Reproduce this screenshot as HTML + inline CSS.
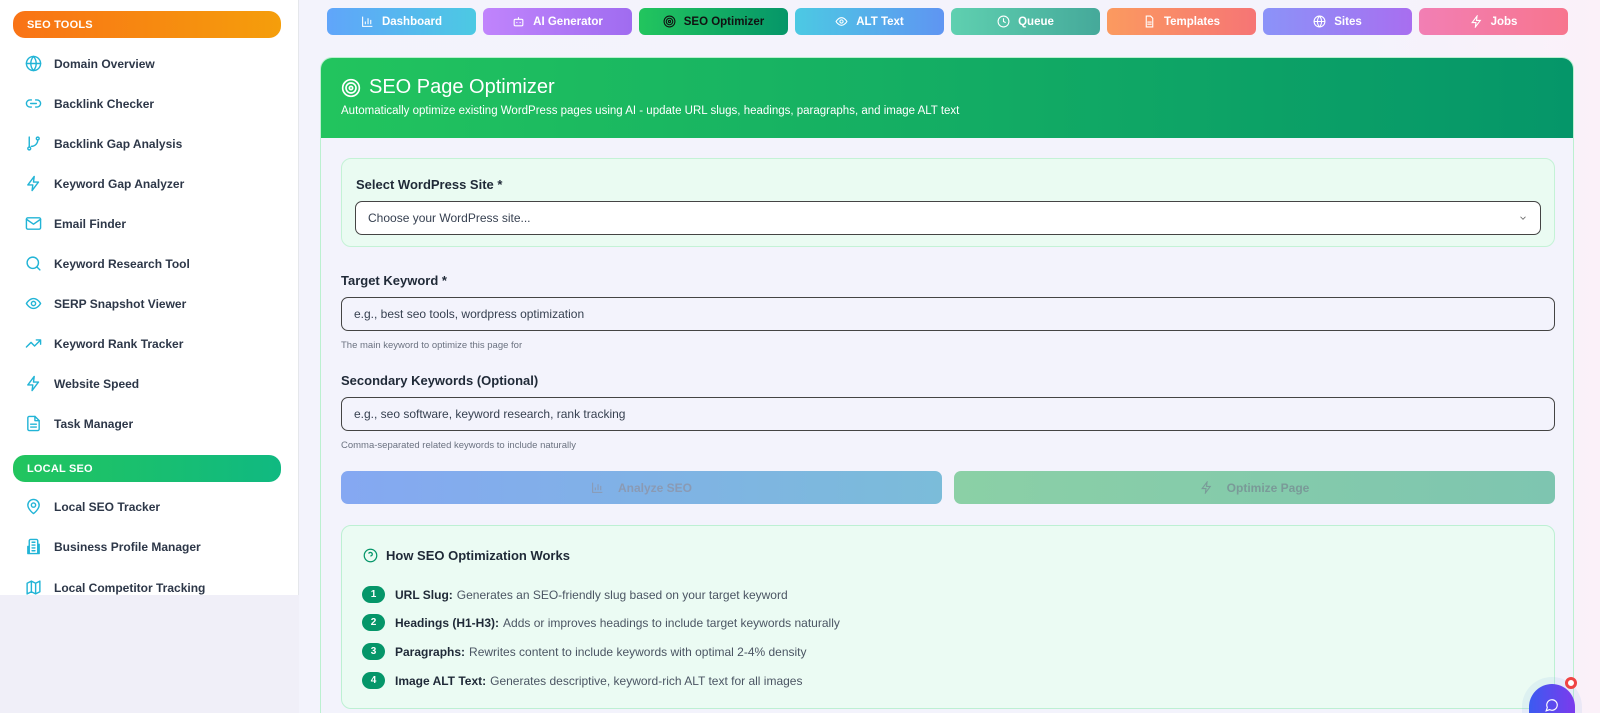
<!DOCTYPE html>
<html style="width:1600px;height:713px;overflow:hidden"><head><meta charset="utf-8"><style>
*{box-sizing:border-box;margin:0;padding:0}
html,body{width:1600px;height:713px;overflow:hidden}
body{font-family:"Liberation Sans",sans-serif;background:linear-gradient(90deg,#f3f3fc 0%,#f4f3fc 85%,#fbf1f9 100%);position:relative;color:#1f2937}
.side{position:absolute;left:0;top:0;width:299px;height:595px;background:#fff;border-right:1px solid #e5e7eb}
.below{position:absolute;left:0;top:595px;width:299px;height:118px;background:#f0eff8}
.sh{position:absolute;left:13px;width:268px;height:27px;border-radius:12px;color:#fff;font-weight:bold;font-size:11px;padding:8px 0 0 14px;letter-spacing:.2px}
.it{position:absolute;left:25px;font-size:12px;font-weight:bold;color:#2d3748;display:flex;align-items:center}
.it svg{width:17px;height:17px;margin-right:12px;stroke:#22b4d6;fill:none;stroke-width:2;stroke-linecap:round;stroke-linejoin:round}
.tabs{position:absolute;left:327px;top:8px;width:1241px;display:flex;gap:7px}
.tab{flex:1;height:27px;border-radius:6px;color:#fff;font-weight:bold;font-size:11.5px;display:flex;align-items:center;justify-content:center;gap:8px}
.tab svg{width:13px;height:13px;stroke:#fff;fill:none;stroke-width:2}
.card{position:absolute;left:320px;top:57px;width:1254px;height:656px;border-radius:12px 12px 0 0;border:1px solid #bbf0d0;border-bottom:none;background:#f3f3fc;overflow:hidden}
.hd{height:80px;background:linear-gradient(90deg,#22c45e,#059669);color:#fff;padding:18px 20px}
.hd h1{font-size:20px;font-weight:normal;display:flex;align-items:center;gap:8px}
.hd p{font-size:11.5px;margin-top:6px}
.abs{position:absolute}
.lbl{font-size:13px;font-weight:bold;color:#1f2937}
.inp{border:1.5px solid #444;border-radius:7px;font-size:12px;color:#374151;padding-left:12px;display:flex;align-items:center}
.help{font-size:9.5px;color:#6b7280}
.badge{display:inline-block;width:23px;height:17px;border-radius:9px;background:#059669;color:#fff;font-size:10px;font-weight:bold;text-align:center;line-height:17px;margin-right:10px}
.row{position:absolute;left:41px;font-size:12px;color:#4b5563;display:flex;align-items:center}
.row b{color:#1f2937;margin-right:4px}
</style></head><body>
<div class="side">
<div class="sh" style="top:11px;background:linear-gradient(90deg,#f97316,#f59e0b)">SEO TOOLS</div>
<div class="it" style="top:55px"><svg viewBox="0 0 24 24"><circle cx="12" cy="12" r="10"/><path d="M2 12h20M12 2a15 15 0 0 1 0 20M12 2a15 15 0 0 0 0 20"/></svg>Domain Overview</div>
<div class="it" style="top:95px"><svg viewBox="0 0 24 24"><path d="M9 17H7a5 5 0 0 1 0-10h2M15 7h2a5 5 0 0 1 0 10h-2M8 12h8"/></svg>Backlink Checker</div>
<div class="it" style="top:135px"><svg viewBox="0 0 24 24"><circle cx="6" cy="19" r="2"/><circle cx="18" cy="5" r="2"/><path d="M6 3v14M18 7a9 9 0 0 1-9 9"/></svg>Backlink Gap Analysis</div>
<div class="it" style="top:175px"><svg viewBox="0 0 24 24"><path d="M13 2 4 14h7l-1 8 9-12h-7z"/></svg>Keyword Gap Analyzer</div>
<div class="it" style="top:215px"><svg viewBox="0 0 24 24"><rect x="2" y="4" width="20" height="16" rx="2"/><path d="m2 6 10 7 10-7"/></svg>Email Finder</div>
<div class="it" style="top:255px"><svg viewBox="0 0 24 24"><circle cx="11" cy="11" r="8"/><path d="m21 21-4.3-4.3"/></svg>Keyword Research Tool</div>
<div class="it" style="top:295px"><svg viewBox="0 0 24 24"><path d="M2 12s4-7 10-7 10 7 10 7-4 7-10 7S2 12 2 12z"/><circle cx="12" cy="12" r="3"/></svg>SERP Snapshot Viewer</div>
<div class="it" style="top:335px"><svg viewBox="0 0 24 24"><path d="m22 7-8.5 8.5-5-5L2 17M16 7h6v6"/></svg>Keyword Rank Tracker</div>
<div class="it" style="top:375px"><svg viewBox="0 0 24 24"><path d="M13 2 4 14h7l-1 8 9-12h-7z"/></svg>Website Speed</div>
<div class="it" style="top:415px"><svg viewBox="0 0 24 24"><path d="M14 2H6a2 2 0 0 0-2 2v16a2 2 0 0 0 2 2h12a2 2 0 0 0 2-2V8z"/><path d="M14 2v6h6M8 13h8M8 17h8"/></svg>Task Manager</div>
<div class="sh" style="top:455px;background:linear-gradient(90deg,#22c55e,#10b981)">LOCAL SEO</div>
<div class="it" style="top:498px"><svg viewBox="0 0 24 24"><path d="M20 10c0 6-8 12-8 12s-8-6-8-12a8 8 0 0 1 16 0z"/><circle cx="12" cy="10" r="3"/></svg>Local SEO Tracker</div>
<div class="it" style="top:538px"><svg viewBox="0 0 24 24"><path d="M6 22V4a2 2 0 0 1 2-2h8a2 2 0 0 1 2 2v18zM6 12H4v10h2M18 9h2v13h-2M10 6h4M10 10h4M10 14h4M10 18h4"/></svg>Business Profile Manager</div>
<div class="it" style="top:579px"><svg viewBox="0 0 24 24"><path d="M3 6l6-3 6 3 6-3v15l-6 3-6-3-6 3zM9 3v15M15 6v15"/></svg>Local Competitor Tracking</div>
</div>
<div class="below"></div>

<div class="tabs">
<div class="tab" style="background:linear-gradient(90deg,#60a5fa,#4cc9e3)"><svg viewBox="0 0 24 24"><path d="M3 3v18h18M8 17v-5M13 17V6M18 17v-8"/></svg>Dashboard</div>
<div class="tab" style="background:linear-gradient(90deg,#c084fc,#a06cf0)"><svg viewBox="0 0 24 24"><rect x="4" y="8" width="16" height="12" rx="2"/><path d="M12 8V4M9 13v2M15 13v2"/></svg>AI Generator</div>
<div class="tab" style="background:linear-gradient(90deg,#22c55e,#059669);color:#111"><svg viewBox="0 0 24 24" style="stroke:#111"><circle cx="12" cy="12" r="10"/><circle cx="12" cy="12" r="6"/><circle cx="12" cy="12" r="2"/></svg>SEO Optimizer</div>
<div class="tab" style="background:linear-gradient(90deg,#4cc9e3,#5f95f2)"><svg viewBox="0 0 24 24"><path d="M2 12s4-7 10-7 10 7 10 7-4 7-10 7S2 12 2 12z"/><circle cx="12" cy="12" r="3"/></svg>ALT Text</div>
<div class="tab" style="background:linear-gradient(90deg,#5fd0b0,#45a99a)"><svg viewBox="0 0 24 24"><circle cx="12" cy="12" r="10"/><path d="M12 6v6l4 2"/></svg>Queue</div>
<div class="tab" style="background:linear-gradient(90deg,#fb9a5f,#f67575)"><svg viewBox="0 0 24 24"><path d="M14 2H6v20h12V6zM8 13h8M8 17h8"/></svg>Templates</div>
<div class="tab" style="background:linear-gradient(90deg,#8b93f8,#a86ef0)"><svg viewBox="0 0 24 24"><circle cx="12" cy="12" r="10"/><path d="M2 12h20M12 2a15 15 0 0 1 0 20M12 2a15 15 0 0 0 0 20"/></svg>Sites</div>
<div class="tab" style="background:linear-gradient(90deg,#f27fb4,#f7758e)"><svg viewBox="0 0 24 24"><path d="M13 2 4 14h7l-1 8 9-12h-7z"/></svg>Jobs</div>
</div>

<div class="card">
<div class="hd"><h1><svg width="20" height="20" viewBox="0 0 24 24" fill="none" stroke="#fff" stroke-width="2"><circle cx="12" cy="12" r="10"/><circle cx="12" cy="12" r="6"/><circle cx="12" cy="12" r="2"/></svg>SEO Page Optimizer</h1>
<p>Automatically optimize existing WordPress pages using AI - update URL slugs, headings, paragraphs, and image ALT text</p></div>
<div class="abs" style="left:20px;top:100px;width:1214px;height:89px;background:#eafbf2;border:1px solid #c4f2d6;border-radius:10px"></div>
<div class="abs lbl" style="left:35px;top:119px">Select WordPress Site *</div>
<div class="abs inp" style="left:34px;top:143px;width:1186px;height:34px;background:#fff">Choose your WordPress site...<svg style="position:absolute;right:12px" width="10" height="10" viewBox="0 0 24 24" fill="none" stroke="#666" stroke-width="2"><path d="m6 9 6 6 6-6"/></svg></div>
<div class="abs lbl" style="left:20px;top:215px">Target Keyword *</div>
<div class="abs inp" style="left:20px;top:239px;width:1214px;height:34px;background:#f3f3fc">e.g., best seo tools, wordpress optimization</div>
<div class="abs help" style="left:20px;top:282px">The main keyword to optimize this page for</div>
<div class="abs lbl" style="left:20px;top:315px">Secondary Keywords (Optional)</div>
<div class="abs inp" style="left:20px;top:339px;width:1214px;height:34px;background:#f3f3fc">e.g., seo software, keyword research, rank tracking</div>
<div class="abs help" style="left:20px;top:382px">Comma-separated related keywords to include naturally</div>
<div class="abs" style="left:20px;top:413px;width:601px;height:33px;border-radius:7px;background:linear-gradient(90deg,#85a8f2,#7bbcd9);color:#8a9ab4;font-size:12px;font-weight:bold;display:flex;align-items:center;justify-content:center;gap:14px"><svg width="13" height="13" viewBox="0 0 24 24" fill="none" stroke="#8a9ab4" stroke-width="2"><path d="M3 3v18h18M8 17v-5M13 17V6M18 17v-8"/></svg>Analyze SEO</div>
<div class="abs" style="left:633px;top:413px;width:601px;height:33px;border-radius:7px;background:linear-gradient(90deg,#8bd0a6,#7ec5b0);color:#7a9a98;font-size:12px;font-weight:bold;display:flex;align-items:center;justify-content:center;gap:14px"><svg width="13" height="13" viewBox="0 0 24 24" fill="none" stroke="#7a9a98" stroke-width="2"><path d="M13 2 4 14h7l-1 8 9-12h-7z"/></svg>Optimize Page</div>
<div class="abs" style="left:20px;top:467px;width:1214px;height:184px;background:#ebfbf3;border:1px solid #bdf0d3;border-radius:10px"></div>
<div class="abs" style="left:42px;top:490px;font-size:13px;font-weight:bold;color:#1f2937;display:flex;align-items:center;gap:8px"><svg width="15" height="15" viewBox="0 0 24 24" fill="none" stroke="#059669" stroke-width="2"><circle cx="12" cy="12" r="10"/><path d="M9.1 9a3 3 0 0 1 5.8 1c0 2-3 3-3 3M12 17h.01"/></svg>How SEO Optimization Works</div>
<div class="row" style="top:528px"><span class="badge">1</span><b>URL Slug:</b> Generates an SEO-friendly slug based on your target keyword</div>
<div class="row" style="top:556px"><span class="badge">2</span><b>Headings (H1-H3):</b> Adds or improves headings to include target keywords naturally</div>
<div class="row" style="top:585px"><span class="badge">3</span><b>Paragraphs:</b> Rewrites content to include keywords with optimal 2-4% density</div>
<div class="row" style="top:614px"><span class="badge">4</span><b>Image ALT Text:</b> Generates descriptive, keyword-rich ALT text for all images</div>
</div>

<div class="abs" style="left:1522px;top:677px;width:60px;height:36px;border-radius:30px 30px 0 0;background:rgba(120,170,230,.12)"></div>
<div class="abs" style="left:1529px;top:684px;width:46px;height:29px;border-radius:23px 23px 0 0;background:linear-gradient(90deg,#3b5bf0,#7c3aed);overflow:hidden"><svg style="position:absolute;left:16px;top:14px" width="14" height="14" viewBox="0 0 24 24" fill="none" stroke="#fff" stroke-width="2"><path d="M7.9 20A9 9 0 1 0 4 16.1L2 22z"/></svg></div>
<div class="abs" style="left:1565px;top:677px;width:12px;height:12px;border-radius:50%;background:#fff;border:3px solid #ef4444"></div>
</body></html>
